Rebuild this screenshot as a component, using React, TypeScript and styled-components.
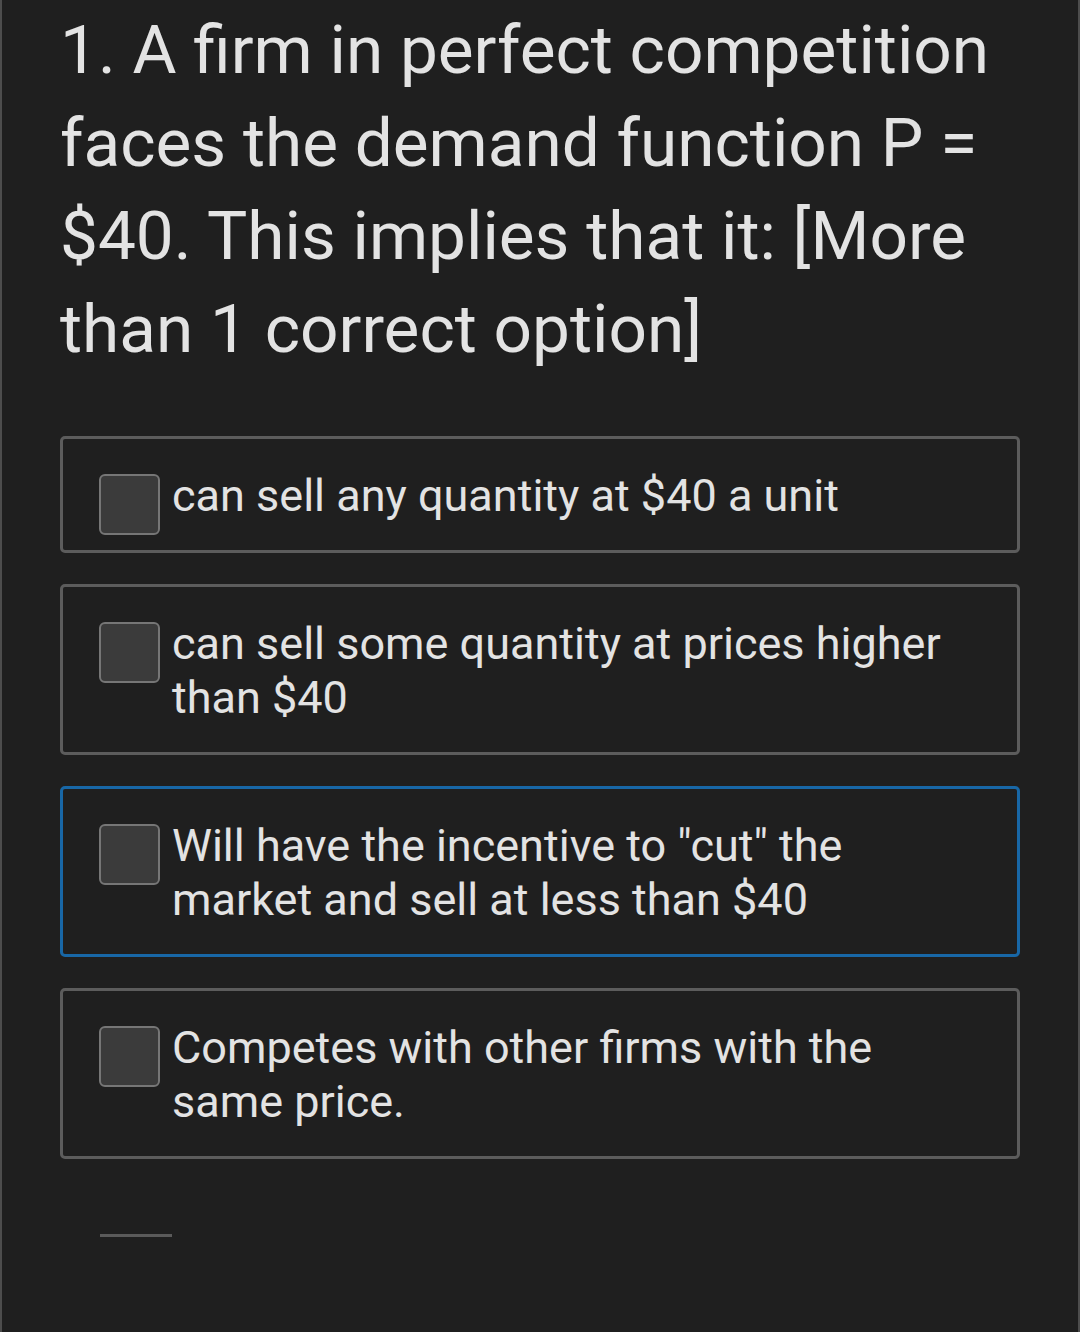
import React from "react";
import styled, { createGlobalStyle } from "styled-components";

const Global = createGlobalStyle`
  html, body { margin: 0; padding: 0; background: #1f1f1f; }
  body { font-family: Roboto, "Noto Sans", Arial, sans-serif; }
`;

const Page = styled.div`
  box-sizing: border-box;
  min-height: 1332px;
  background: #1f1f1f;
  border-left: 2px solid #4d4d4d;
  border-right: 2px solid #4d4d4d;
  padding: 3px 58px 0 58px;
  color: #e3e3e3;
`;

const Question = styled.h1`
  margin: 0 0 61px 0;
  font-weight: 400;
  font-size: 67.5px;
  line-height: 93px;
  letter-spacing: 0;
`;

const Options = styled.div`
  display: flex;
  flex-direction: column;
  gap: 31px;
`;

const Option = styled.label<{ $focused?: boolean }>`
  box-sizing: border-box;
  display: flex;
  align-items: flex-start;
  gap: 12px;
  padding: 30px 59px 27px 36px;
  border: 3px solid ${(p) => (p.$focused ? "#1867a6" : "#5c5c5c")};
  border-radius: 5px;
  background: #1f1f1f;
`;

const Box = styled.span`
  box-sizing: border-box;
  flex: none;
  width: 61px;
  height: 61px;
  margin-top: 5px;
  margin-bottom: -12px;
  background: #3b3b3b;
  border: 2px solid #767676;
  border-radius: 6px;
`;

const OptionText = styled.span`
  font-size: 45px;
  line-height: 54px;
  color: #e3e3e3;
`;

const AnswerLine = styled.div`
  width: 72px;
  height: 3px;
  margin: 75px 0 0 40px;
  background: #5a5a5a;
`;

const options = [
  { text: "can sell any quantity at $40 a unit" },
  { text: "can sell some quantity at prices higher than $40" },
  { text: 'Will have the incentive to "cut" the market and sell at less than $40', focused: true },
  { text: "Competes with other firms with the same price." },
];

export default function App() {
  return (
    <>
      <Global />
      <Page>
        <Question>
          1. A firm in perfect competition faces the demand function P = $40. This implies that it: [More than 1 correct option]
        </Question>
        <Options>
          {options.map((o, i) => (
            <Option key={i} $focused={o.focused}>
              <Box />
              <OptionText>{o.text}</OptionText>
            </Option>
          ))}
        </Options>
        <AnswerLine />
      </Page>
    </>
  );
}
